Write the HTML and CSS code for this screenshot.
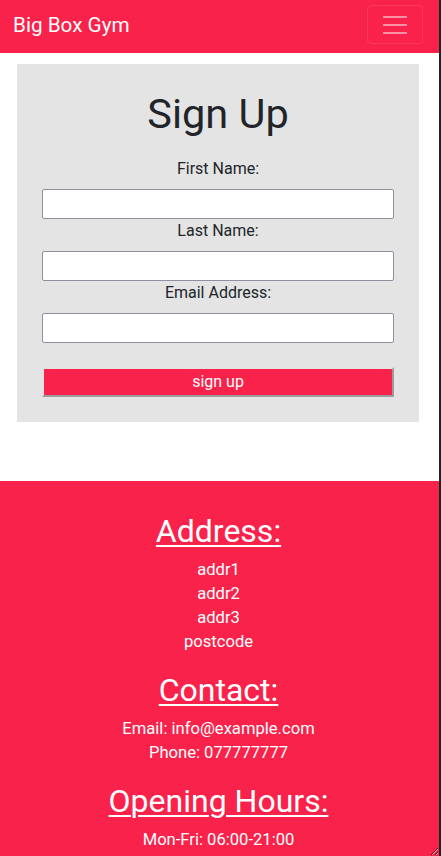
FILE: index.html
```html
<!DOCTYPE html>
<html lang="en">
<head>
<meta charset="utf-8">
<title>Big Box Gym - Sign Up</title>
<link rel="stylesheet" href="styles.css">
</head>
<body>
<div class="page">
  <nav class="navbar">
    <a class="brand" href="#">Big Box Gym</a>
    <button class="toggler" type="button" aria-label="Toggle navigation">
      <svg width="24" height="18" viewBox="0 0 24 18" aria-hidden="true">
        <path d="M0 1h24M0 9h24M0 17h24" stroke="rgba(255,255,255,0.5)" stroke-width="2"/>
      </svg>
    </button>
  </nav>
  <main class="content">
    <section class="card">
      <h1 class="title">Sign Up</h1>
      <form class="form">
        <label class="label" for="fn">First Name:</label>
        <input class="field" id="fn" type="text">
        <label class="label" for="ln">Last Name:</label>
        <input class="field" id="ln" type="text">
        <label class="label" for="em">Email Address:</label>
        <input class="field" id="em" type="email">
        <button class="submit" type="button">sign up</button>
      </form>
    </section>
  </main>
  <footer class="footer">
    <h2 class="foot-title">Address:</h2>
    <p class="foot-text">addr1<br>addr2<br>addr3<br>postcode</p>
    <h2 class="foot-title">Contact:</h2>
    <p class="foot-text">Email: info@example.com<br>Phone: 077777777</p>
    <h2 class="foot-title">Opening Hours:</h2>
    <p class="foot-text">Mon-Fri: 06:00-21:00<br>Sat-Sun: 08:00-18:00</p>
  </footer>
</div>
</body>
</html>
```

FILE: styles.css
```css
html, body {
  margin: 0;
  padding: 0;
  background: #ffffff;
}

body {
  font-family: Roboto, "Liberation Sans", sans-serif;
  font-size: 16px;
  line-height: 24px;
  color: #212529;
}

.page {
  box-sizing: border-box;
  height: 100vh;
  border-right: 2px solid #202124;
  overflow-y: auto;
  overflow-x: hidden;
  scrollbar-width: none;
  resize: both;
  display: flex;
  flex-direction: column;
}

.navbar {
  flex: none;
  box-sizing: border-box;
  height: 53px;
  background: #f9224b;
  display: flex;
  justify-content: space-between;
  align-items: flex-start;
  padding: 5px 16px 0 13px;
}

.brand {
  margin-top: 5px;
  font-size: 20.7px;
  line-height: 30px;
  color: #ffffff;
  text-decoration: none;
}

.toggler {
  box-sizing: border-box;
  width: 56px;
  height: 39px;
  padding: 0;
  background: transparent;
  border: 1px solid rgba(255, 255, 255, 0.1);
  border-radius: 4px;
  display: flex;
  align-items: center;
  justify-content: center;
}

.toggler svg {
  display: block;
}

.content {
  flex: none;
  padding: 11px 0 59px 17px;
}

.card {
  box-sizing: border-box;
  width: 402px;
  background: #e4e4e4;
  padding: 26px 25px 25px;
}

.title {
  margin: 0 0 19px;
  font-size: 41.5px;
  line-height: 48px;
  font-weight: 400;
  text-align: center;
  color: #212529;
}

.form {
  display: flex;
  flex-direction: column;
}

.label {
  display: block;
  text-align: center;
  margin-bottom: 8px;
}

.field {
  box-sizing: border-box;
  width: 352px;
  height: 30px;
  margin: 0;
  border: 1px solid #8f8f9d;
  border-radius: 2px;
  background: #ffffff;
  font: inherit;
}

.submit {
  box-sizing: border-box;
  width: 352px;
  height: 30px;
  margin-top: 24px;
  padding: 0;
  background: #f9224b;
  color: #ffffff;
  font-family: Roboto, "Liberation Sans", sans-serif;
  font-size: 16px;
  line-height: 24px;
  border-width: 2px;
  border-style: solid;
  border-color: transparent #9b9b9b #9b9b9b transparent;
  background-clip: padding-box;
}

.footer {
  flex: 1 0 auto;
  background: #f9224b;
  color: #ffffff;
  text-align: center;
  padding: 31px 2px 40px 0;
}

.foot-title {
  margin: 0 0 8px;
  font-size: 32px;
  line-height: 38px;
  font-weight: 400;
  text-decoration: underline;
  text-decoration-thickness: 2px;
  text-underline-offset: 3px;
}

.foot-text {
  margin: 0 0 17px;
  font-size: 16.6px;
}
```
